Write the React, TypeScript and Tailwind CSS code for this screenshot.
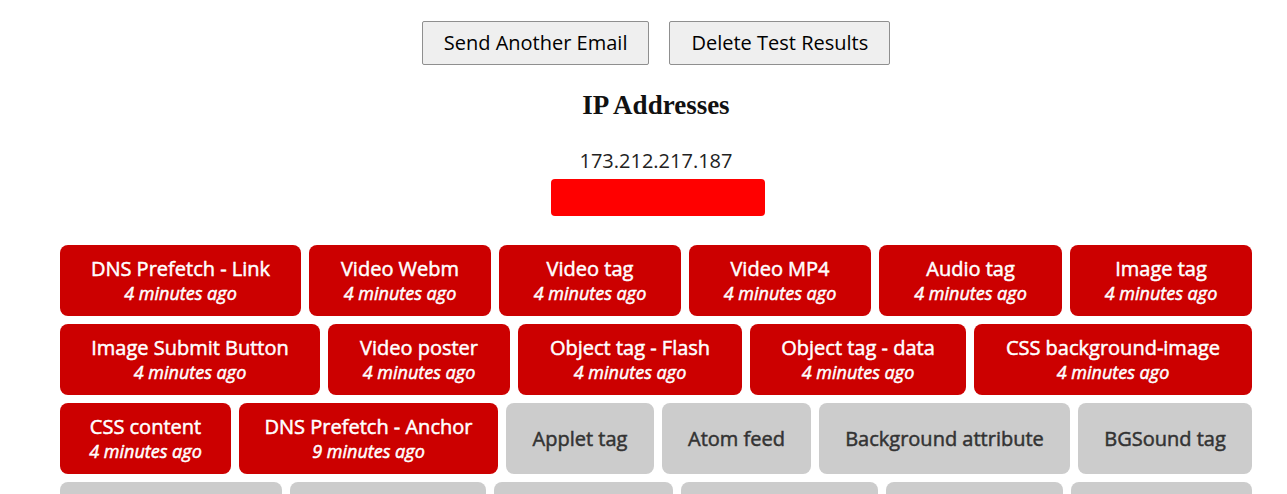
import React from "react";

type Tile = { name: string; time?: string; w: number };

const rows: Tile[][] = [
  [
    { name: "DNS Prefetch - Link", time: "4 minutes ago", w: 241 },
    { name: "Video Webm", time: "4 minutes ago", w: 182 },
    { name: "Video tag", time: "4 minutes ago", w: 182 },
    { name: "Video MP4", time: "4 minutes ago", w: 182 },
    { name: "Audio tag", time: "4 minutes ago", w: 183 },
    { name: "Image tag", time: "4 minutes ago", w: 182 },
  ],
  [
    { name: "Image Submit Button", time: "4 minutes ago", w: 260 },
    { name: "Video poster", time: "4 minutes ago", w: 182 },
    { name: "Object tag - Flash", time: "4 minutes ago", w: 224 },
    { name: "Object tag - data", time: "4 minutes ago", w: 216 },
    { name: "CSS background-image", time: "4 minutes ago", w: 278 },
  ],
  [
    { name: "CSS content", time: "4 minutes ago", w: 171 },
    { name: "DNS Prefetch - Anchor", time: "9 minutes ago", w: 259 },
    { name: "Applet tag", w: 148 },
    { name: "Atom feed", w: 149 },
    { name: "Background attribute", w: 251 },
    { name: "BGSound tag", w: 174 },
  ],
  [
    { name: "Base tag", w: 222 },
    { name: "Body background", w: 196 },
    { name: "Button tag", w: 179 },
    { name: "CSS import", w: 197 },
    { name: "CSS link", w: 177 },
    { name: "CSS cursor", w: 181 },
  ],
];

function TileBox({ t }: { t: Tile }) {
  const hit = !!t.time;
  return (
    <div
      className={
        "h-[71px] shrink-0 rounded-[8px] flex flex-col items-center justify-center text-center font-normal leading-[25px] [-webkit-text-stroke:0.5px_currentColor] " +
        (hit ? "bg-[#cc0000] text-white" : "bg-[#cccccc] text-[#333333]")
      }
      style={{ width: t.w }}
    >
      <div className="text-[20px]">{t.name}</div>
      {t.time && <div className="text-[18px] italic leading-[24px]">{t.time}</div>}
    </div>
  );
}

export default function App() {
  return (
    <div
      className="bg-white min-h-[494px] pl-[60px] pr-[35px] pt-[21px] text-black"
      style={{ fontFamily: '"Open Sans", sans-serif' }}
    >
      <div className="flex justify-center gap-[20px]">
        <button className="h-[44px] px-[21px] bg-[#efefef] border border-[#8f8f8f] rounded-[2px] text-[20px] text-black">
          Send Another Email
        </button>
        <button className="h-[44px] px-[21px] bg-[#efefef] border border-[#8f8f8f] rounded-[2px] text-[20px] text-black">
          Delete Test Results
        </button>
      </div>
      <h2
        className="mt-[24px] text-center text-[27px] font-bold leading-[32px] text-[#111]"
        style={{ fontFamily: '"Liberation Serif", serif' }}
      >
        IP Addresses
      </h2>
      <div className="mt-[26px] text-center text-[20px] leading-[27px] text-[#222]">173.212.217.187</div>
      <div className="flex justify-center mt-[5px] pl-[4px]">
        <div className="w-[214px] h-[37px] bg-[#ff0000] rounded-[4px]" />
      </div>
      <div className="mt-[29px] flex flex-col gap-[8px]">
        {rows.map((r, i) => (
          <div key={i} className="flex gap-[8px]">
            {r.map((t) => (
              <TileBox key={t.name} t={t} />
            ))}
          </div>
        ))}
      </div>
    </div>
  );
}
